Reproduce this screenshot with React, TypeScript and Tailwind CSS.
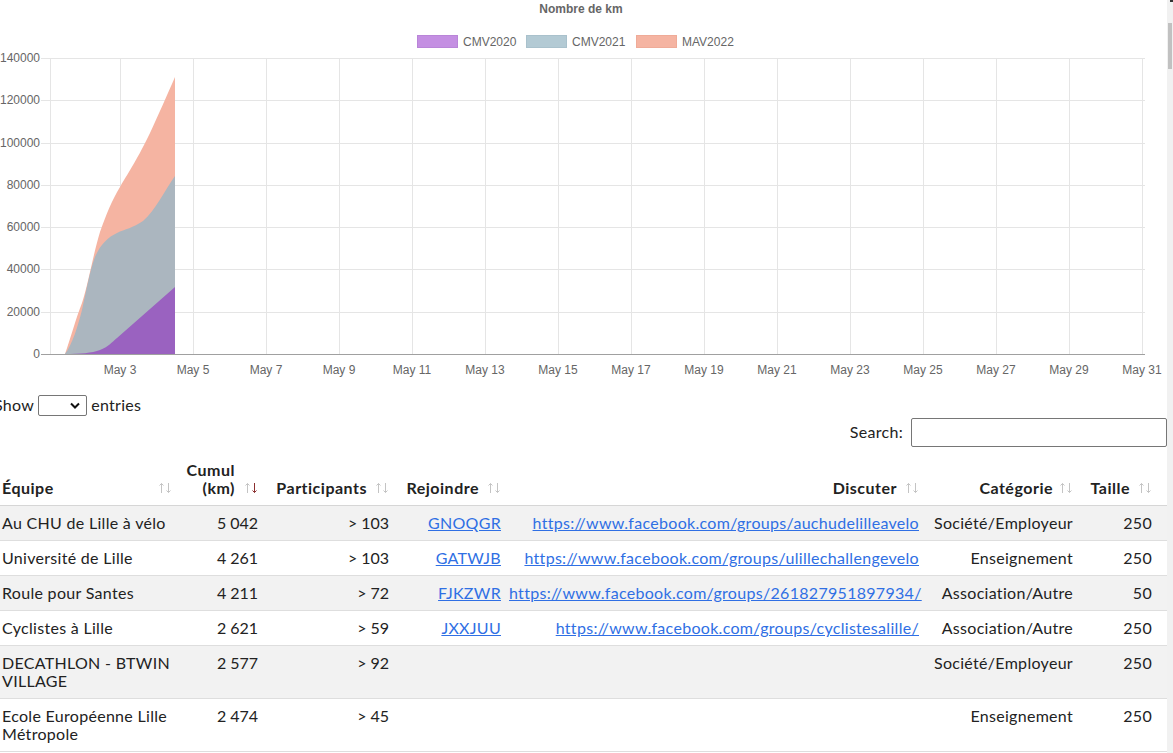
import React from "react";

const SortIcon = ({ active }: { active?: boolean }) => (
  <svg width="14" height="12" viewBox="0 0 14 12" className="shrink-0 mb-[3px]">
    <g stroke="#c4c4c4" strokeWidth="1" fill="none">
      <path d="M3.5 11 V1.5 M1.5 3.5 L3.5 1.5 L5.5 3.5" />
    </g>
    <g stroke={active ? "#8b2f2f" : "#c4c4c4"} strokeWidth="1" fill="none">
      <path d="M10.5 1 V10.5 M8.5 8.5 L10.5 10.5 L12.5 8.5" />
    </g>
  </svg>
);

const Chart = () => {
  const yLabels = ["140000", "120000", "100000", "80000", "60000", "40000", "20000", "0"];
  const top = 58;
  const bottom = 354;
  const step = (bottom - top) / 7;
  const xs = Array.from({ length: 15 }, (_, i) => 120 + 73 * i);
  const xLabels = xs.map((_, i) => `May ${3 + 2 * i}`);
  return (
    <svg width="1167" height="393" viewBox="0 0 1167 393" className="block tracking-[0px]">
      <text x="581" y="13" textAnchor="middle" fontSize="12" fontWeight="bold" fill="#666" fontFamily="'Liberation Sans', Arial, sans-serif">
        Nombre de km
      </text>
      {/* legend */}
      <g fontSize="12" fill="#666" fontFamily="'Liberation Sans', Arial, sans-serif">
        <rect x="417.5" y="35.5" width="40" height="12" fill="#c48fe2" stroke="#b985d8" />
        <text x="463" y="46">CMV2020</text>
        <rect x="526.5" y="35.5" width="40" height="12" fill="#b3cad4" stroke="#a9c1cc" />
        <text x="572" y="46">CMV2021</text>
        <rect x="636.5" y="35.5" width="40" height="12" fill="#f5b4a2" stroke="#efab98" />
        <text x="682" y="46">MAV2022</text>
      </g>
      {/* grid */}
      <g stroke="#e5e5e5" strokeWidth="1">
        {yLabels.map((_, i) => {
          const y = Math.round(top + step * i) + 0.5;
          return <line key={i} x1="41" x2="1145" y1={y} y2={y} />;
        })}
        <line x1="50.5" x2="50.5" y1={top} y2={bottom} />
        {xs.map((x) => (
          <line key={x} x1={x + 0.5} x2={x + 0.5} y1={top} y2={bottom} />
        ))}
      </g>
      {/* areas */}
      <path
        d="M50,354 L65,354 C70,340 76,318 82,303 C88,285 93,255 100,232 C106,215 112,200 120,187 C130,170 138,158 150,133 C158,116 167,95 175,77 L175,354 Z"
        fill="#f5b4a2"
      />
      <path
        d="M50,354 L65,354 C72,345 78,326 82,310 C86,292 90,270 95,257 C100,245 108,237 117,233 C125,229 133,228 143,221 C155,211 165,190 175,176 L175,354 Z"
        fill="#abb6bf"
      />
      <path
        d="M50,354 L65,354 C80,354 92,353 100,350 C108,347 112,342 117,338 L175,287 L175,354 Z"
        fill="#9a62c0"
      />
      <line x1="41" x2="1145" y1="354.5" y2="354.5" stroke="#a0a0a0" strokeWidth="1" />
      <g fontSize="12" fill="#666" fontFamily="'Liberation Sans', Arial, sans-serif">
        {yLabels.map((l, i) => (
          <text key={l} x="40" y={top + step * i + 4} textAnchor="end">
            {l}
          </text>
        ))}
        {xs.map((x, i) => (
          <text key={x} x={x} y="374" textAnchor="middle">
            {xLabels[i]}
          </text>
        ))}
      </g>
    </svg>
  );
};

type Row = {
  team: string;
  km: string;
  part: string;
  code?: string;
  url?: string;
  cat: string;
  size: string;
};

const rows: Row[] = [
  { team: "Au CHU de Lille à vélo", km: "5\u202F042", part: ">\u202F103", code: "GNOQGR", url: "https://www.facebook.com/groups/auchudelilleavelo", cat: "Société/Employeur", size: "250" },
  { team: "Université de Lille", km: "4\u202F261", part: ">\u202F103", code: "GATWJB", url: "https://www.facebook.com/groups/ulillechallengevelo", cat: "Enseignement", size: "250" },
  { team: "Roule pour Santes", km: "4\u202F211", part: ">\u202F72", code: "FJKZWR", url: "https://www.facebook.com/groups/261827951897934/", cat: "Association/Autre", size: "50" },
  { team: "Cyclistes à Lille", km: "2\u202F621", part: ">\u202F59", code: "JXXJUU", url: "https://www.facebook.com/groups/cyclistesalille/", cat: "Association/Autre", size: "250" },
  { team: "DECATHLON - BTWIN VILLAGE", km: "2\u202F577", part: ">\u202F92", cat: "Société/Employeur", size: "250" },
  { team: "Ecole Européenne Lille Métropole", km: "2\u202F474", part: ">\u202F45", cat: "Enseignement", size: "250" },
];

const font = { fontFamily: "Lato, 'Noto Sans', sans-serif" };

export default function App() {
  return (
    <div className="flex w-[1173px] h-[753px] overflow-hidden bg-white" style={font}>
      <div className="w-[1167px] shrink-0 flex flex-col text-[16px] text-[#222]">
        <Chart />
        <div className="flex items-center h-[24px] ml-[-6px] gap-[4px] tracking-[0.3px]">
          <span>Show</span>
          <div className="w-[49px] h-[21px] border border-[#767676] rounded-[2px] flex items-center justify-end pr-[6px]">
            <svg width="10" height="7" viewBox="0 0 10 7">
              <path d="M1 1.5 L5 5.5 L9 1.5" stroke="#111" strokeWidth="2" fill="none" />
            </svg>
          </div>
          <span>entries</span>
        </div>
        <div className="flex items-center justify-end h-[30px] gap-[8px] tracking-[0.3px]">
          <span>Search:</span>
          <div className="w-[256px] h-[29px] border border-[#767676] rounded-[2px]" />
        </div>
        <table className="table-fixed border-collapse w-[1167px] leading-[18px] tracking-[0.3px]">
          <colgroup>
            <col className="w-[180px]" />
            <col className="w-[86px]" />
            <col className="w-[131px]" />
            <col className="w-[112px]" />
            <col className="w-[418px]" />
            <col className="w-[154px]" />
            <col className="w-[86px]" />
          </colgroup>
          <thead className="tracking-[0.5px]">
            <tr className="h-[58px] border-b border-[#d6d6d6]">
              <th className="align-bottom pl-[2px] pr-[8px] pb-[8px] font-bold">
                <div className="flex items-end justify-between">
                  <span>Équipe</span>
                  <SortIcon />
                </div>
              </th>
              <th className="align-bottom pr-[8px] pb-[8px] font-bold">
                <div className="flex items-end justify-end gap-[9px]">
                  <span className="text-right">Cumul<br />(km)</span>
                  <SortIcon active />
                </div>
              </th>
              <th className="align-bottom pr-[8px] pb-[8px] font-bold">
                <div className="flex items-end justify-end gap-[8px]">
                  <span>Participants</span>
                  <SortIcon />
                </div>
              </th>
              <th className="align-bottom pr-[8px] pb-[8px] font-bold">
                <div className="flex items-end justify-end gap-[8px]">
                  <span>Rejoindre</span>
                  <SortIcon />
                </div>
              </th>
              <th className="align-bottom pr-[8px] pb-[8px] font-bold">
                <div className="flex items-end justify-end gap-[8px]">
                  <span>Discuter</span>
                  <SortIcon />
                </div>
              </th>
              <th className="align-bottom pr-[8px] pb-[8px] font-bold">
                <div className="flex items-end justify-end gap-[6px]">
                  <span>Catégorie</span>
                  <SortIcon />
                </div>
              </th>
              <th className="align-bottom pr-[15px] pb-[8px] font-bold">
                <div className="flex items-end justify-end gap-[8px]">
                  <span>Taille</span>
                  <SortIcon />
                </div>
              </th>
            </tr>
          </thead>
          <tbody>
            {rows.map((r, i) => (
              <tr key={r.team} className={`border-b border-[#dedede] ${i % 2 === 0 ? "bg-[#f2f2f2]" : "bg-white"}`}>
                <td className="align-top pl-[2px] pr-[8px] py-[8px]">{r.team}</td>
                <td className="align-top pr-[8px] py-[8px] text-right">{r.km}</td>
                <td className="align-top pr-[8px] py-[8px] text-right">{r.part}</td>
                <td className="align-top pr-[8px] py-[8px] text-right">
                  {r.code && <a className="text-[#2f6fe4] underline" href="#">{r.code}</a>}
                </td>
                <td className="align-top pr-[8px] py-[8px] text-right whitespace-nowrap">
                  {r.url && <a className="text-[#2f6fe4] underline" href="#">{r.url}</a>}
                </td>
                <td className="align-top pr-[8px] py-[8px] text-right">{r.cat}</td>
                <td className="align-top pr-[15px] py-[8px] text-right">{r.size}</td>
              </tr>
            ))}
          </tbody>
        </table>
      </div>
      <div className="w-[6px] shrink-0 bg-[#f1f1f1] flex flex-col">
        <div className="h-[2px] bg-[#333] ml-[3px]" />
        <div className="h-[21px]" />
        <div className="h-[46px] mx-[1px] bg-[#c1c1c1]" />
      </div>
    </div>
  );
}
